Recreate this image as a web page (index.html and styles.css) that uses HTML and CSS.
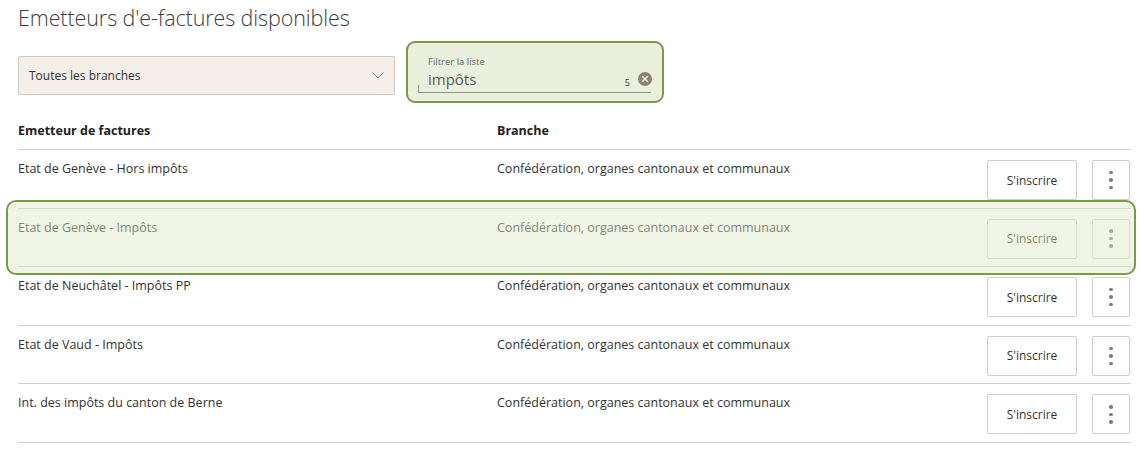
FILE: index.html
```html
<html>
  <head>
    <title>Emetteurs d'e-factures</title>
    <link rel="stylesheet" href="styles.css">
  </head>
  <body>
    <div class="page">
      <h1>Emetteurs d'e-factures disponibles</h1>

      <div class="filters">
        <div class="select">
          <span>Toutes les branches</span>
          <svg class="chevron" width="12" height="7" viewBox="0 0 12 7">
            <path d="M0.5 0.5 L6 6 L11.5 0.5" fill="none" stroke="#8a8a8a" stroke-width="1"/>
          </svg>
        </div>

        <div class="search">
          <div class="focus-ring"></div>
          <div class="search-field">
            <label>Filtrer la liste</label>
            <div class="search-value">
              <span class="query">impôts</span>
              <span class="count">5</span>
              <svg class="clear" width="14" height="14" viewBox="0 0 14 14">
                <circle cx="7" cy="7" r="7" fill="#8a8470"/>
                <path d="M4.2 4.2 L9.8 9.8 M9.8 4.2 L4.2 9.8" stroke="#f0f0e8" stroke-width="1.4"/>
              </svg>
            </div>
          </div>
        </div>
      </div>

      <div class="table">
        <div class="row head">
          <div class="col-name">Emetteur de factures</div>
          <div class="col-branch">Branche</div>
        </div>

        <div class="row">
          <div class="col-name">Etat de Genève - Hors impôts</div>
          <div class="col-branch">Confédération, organes cantonaux et communaux</div>
          <div class="actions">
            <button class="btn">S'inscrire</button>
            <button class="btn more"><i></i><i></i><i></i></button>
          </div>
        </div>

        <div class="row marked">
          <div class="col-name">Etat de Genève - Impôts</div>
          <div class="col-branch">Confédération, organes cantonaux et communaux</div>
          <div class="actions">
            <button class="btn">S'inscrire</button>
            <button class="btn more"><i></i><i></i><i></i></button>
          </div>
          <div class="row-ring"></div>
        </div>

        <div class="row">
          <div class="col-name">Etat de Neuchâtel - Impôts PP</div>
          <div class="col-branch">Confédération, organes cantonaux et communaux</div>
          <div class="actions">
            <button class="btn">S'inscrire</button>
            <button class="btn more"><i></i><i></i><i></i></button>
          </div>
        </div>

        <div class="row">
          <div class="col-name">Etat de Vaud - Impôts</div>
          <div class="col-branch">Confédération, organes cantonaux et communaux</div>
          <div class="actions">
            <button class="btn">S'inscrire</button>
            <button class="btn more"><i></i><i></i><i></i></button>
          </div>
        </div>

        <div class="row">
          <div class="col-name">Int. des impôts du canton de Berne</div>
          <div class="col-branch">Confédération, organes cantonaux et communaux</div>
          <div class="actions">
            <button class="btn">S'inscrire</button>
            <button class="btn more"><i></i><i></i><i></i></button>
          </div>
        </div>
      </div>
    </div>
  </body>
</html>
```

FILE: styles.css
```css
body {
  margin: 0;
  background: #fff;
  font-family: "Open Sans", "Noto Sans", sans-serif;
  color: #333;
}

.page {
  padding: 0 10px 0 18px;
}

h1 {
  margin: 0;
  padding-top: 3px;
  height: 53px;
  box-sizing: border-box;
  font-size: 21.5px;
  font-weight: 300;
  color: #3c3c3c;
  letter-spacing: -0.1px;
}

.filters {
  display: flex;
  align-items: flex-start;
  height: 59px;
}

.select {
  box-sizing: border-box;
  width: 377px;
  height: 39px;
  margin-top: 3px;
  padding: 0 10px;
  display: flex;
  align-items: center;
  justify-content: space-between;
  background: #f4efe8;
  border: 1px solid #cfcac3;
  border-radius: 2px;
  font-size: 12px;
  color: #333;
}

.search {
  position: relative;
  margin-left: 23px;
  width: 233px;
}

.search-field {
  position: relative;
  box-sizing: border-box;
  height: 37px;
  margin-top: 3px;
  padding: 0 0 0 9px;
  border-bottom: 1px solid #8f9683;
  border-left: 1px solid #8f9683;
  border-image: linear-gradient(to bottom, transparent 80%, #8f9683 80%) 1;
}

.search-field label {
  display: block;
  font-size: 9.5px;
  color: #666;
  line-height: 12px;
}

.search-value {
  display: flex;
  align-items: center;
  height: 22px;
}

.query {
  flex: 1;
  font-size: 15px;
  color: #5a5a5a;
}

.count {
  font-size: 9px;
  color: #333;
  margin: 6px 8px 0 0;
}

.clear {
  margin-right: -1px;
}

.focus-ring {
  position: absolute;
  left: -12px;
  top: -12px;
  box-sizing: border-box;
  width: 258px;
  height: 62px;
  border: 2px solid #7b9a45;
  border-radius: 9px;
  background: #eaf0dd;
}

.table {
  width: 1113px;
}

.row {
  position: relative;
  display: flex;
  box-sizing: border-box;
  height: 58.6px;
  border-bottom: 1px solid #cfcfcf;
  font-size: 12.5px;
}

.row.head {
  height: 38px;
  font-weight: 700;
  color: #222;
}

.row.head .col-name,
.row.head .col-branch {
  padding-top: 10px;
}

.col-name {
  width: 479px;
  padding-top: 10px;
}

.col-branch {
  flex: 1;
  padding-top: 10px;
}

.actions {
  display: flex;
  gap: 15px;
  padding: 10px 1px 0 0;
}

.btn {
  box-sizing: border-box;
  height: 40px;
  width: 90px;
  background: #fff;
  border: 1px solid #cfcfcf;
  border-radius: 2px;
  font-family: inherit;
  font-size: 12px;
  color: #333;
}

.btn.more {
  width: 38px;
  display: flex;
  flex-direction: column;
  align-items: center;
  justify-content: center;
  gap: 4px;
}

.btn.more i {
  width: 3.5px;
  height: 3.5px;
  border-radius: 50%;
  background: #7f7f7f;
}

.row-ring {
  position: absolute;
  left: -12px;
  right: -5px;
  top: -9px;
  bottom: -9px;
  border: 2px solid #7b9a45;
  border-radius: 10px;
  background: rgba(222, 233, 200, 0.45);
}
```
